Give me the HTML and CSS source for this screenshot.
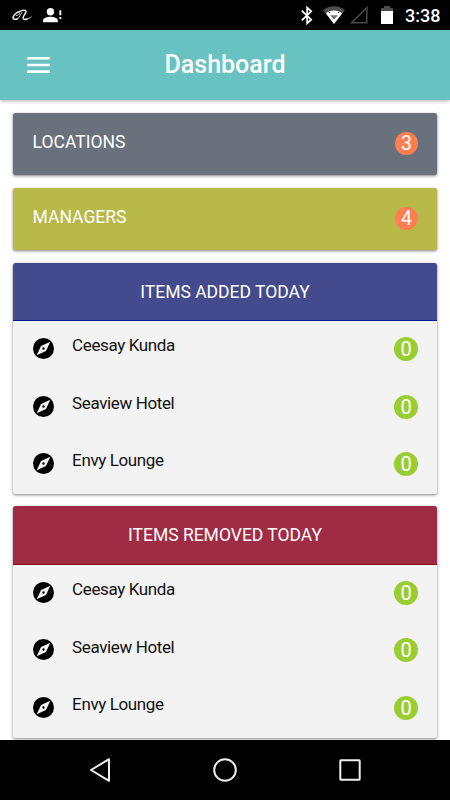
FILE: index.html
```html
<!DOCTYPE html>
<html lang="en">
<head>
<meta charset="utf-8">
<title>Dashboard</title>
<link rel="stylesheet" href="styles.css">
</head>
<body>
<svg class="defs" aria-hidden="true">
  <symbol id="compass" viewBox="0 0 21 21">
    <circle cx="10.5" cy="10.5" r="10.500" fill="#000"/>
    <path fill="#f3f3f3" fill-rule="evenodd" d="M17.300 3.700 13 13 3.700 17.300 8 8ZM10.500 9.300A1.200 1.200 0 1 0 10.500 11.700 1.200 1.200 0 0 0 10.500 9.300Z"/>
  </symbol>
</svg>
<div class="screen">
  <div class="status">
    <div class="status-left">
      <svg width="20" height="12" viewBox="0 0 20 12" fill="none" stroke="#eee" stroke-linecap="round" stroke-linejoin="round"><path stroke-width="1.500" d="M8 2.500C4.500 3 1.500 6 1 8.500C.8 10.800 3.500 10.600 5.500 9.800"/><path stroke-width=".9" d="M4.200 6.500C6 6.600 8.200 5.200 7.600 4.200M5.500 9.800C8 8.500 8 5.500 10 3.500"/><path stroke-width="1.500" d="M8 2.500C10 1 13.500 .6 14 2.200C14.400 4 11 7 11 9C11.200 10.800 13.500 10.500 15 10"/><path stroke-width=".8" d="M15 10C16.500 9.600 18 9 19.200 8"/></svg>
      <svg width="20" height="15" viewBox="0 0 20 15" fill="#fff"><circle cx="7.500" cy="3.700" r="3.700"/><path d="M0 14.300V12.500C0 10 4 8.800 7.400 8.800S14.800 10 14.800 12.500V14.300Z"/><path d="M16.400 2.300H18.300V7.300H16.400ZM16.400 9H18.300V10.900H16.400Z"/></svg>
    </div>
    <div class="status-right">
      <svg class="bt" width="12" height="19" viewBox="0 0 12 19" fill="none" stroke="#fff" stroke-width="1.800"><path d="M.8 4.600 10.200 13.700 6.200 17.300V1.700L10.200 5.300.8 14.400"/></svg>
      <svg class="wifi" width="22" height="19" viewBox="0 0 22 19"><path fill="#4d4d4d" d="M0 4.200C6-1.200 16-1.200 22 4.200L11 18Z"/><path fill="#fff" d="M2.800 7.300C7.500 3.600 14.500 3.600 19.200 7.300L11 18Z"/><path fill="#777" d="M7 9.200H15L11 13.700Z"/><path fill="#444" d="M5 6.700 7.300 5.500 7 7.200ZM17 6.700 14.700 5.500 15 7.200Z"/></svg>
      <svg class="cell" width="18" height="18" viewBox="0 0 18 18" fill="none" stroke="#4a4a4a" stroke-width="1.500"><path d="M1.600 16.800 16.800 1.600V16.800Z"/></svg>
      <svg class="battery" width="12" height="18" viewBox="0 0 12 18"><path fill="#4d4d4d" d="M0 2H3V0H9V2H12V6H0Z"/><path fill="#fff" d="M0 5H12V18H0Z"/></svg>
      <span class="clock">3:38</span>
    </div>
  </div>
  <header class="toolbar">
    <svg width="23" height="16" viewBox="0 0 23 16" fill="#fff"><path d="M0 0H23V2.600H0ZM0 6.700H23V9.300H0ZM0 13.300H23V15.900H0Z"/></svg>
    <h1>Dashboard</h1>
  </header>
  <main>
    <section class="card tile locations"><span>LOCATIONS</span><b class="badge coral">3</b></section>
    <section class="card tile managers"><span>MANAGERS</span><b class="badge coral">4</b></section>
    <section class="card">
      <h2 class="added">ITEMS ADDED TODAY</h2>
      <ul>
        <li><svg class="compass"><use href="#compass"/></svg><span>Ceesay Kunda</span><b class="badge">0</b></li>
        <li><svg class="compass"><use href="#compass"/></svg><span>Seaview Hotel</span><b class="badge">0</b></li>
        <li><svg class="compass"><use href="#compass"/></svg><span>Envy Lounge</span><b class="badge">0</b></li>
      </ul>
    </section>
    <section class="card">
      <h2 class="removed">ITEMS REMOVED TODAY</h2>
      <ul>
        <li><svg class="compass"><use href="#compass"/></svg><span>Ceesay Kunda</span><b class="badge">0</b></li>
        <li><svg class="compass"><use href="#compass"/></svg><span>Seaview Hotel</span><b class="badge">0</b></li>
        <li><svg class="compass"><use href="#compass"/></svg><span>Envy Lounge</span><b class="badge">0</b></li>
      </ul>
    </section>
  </main>
  <nav>
    <svg width="24" height="26" viewBox="0 0 24 26"><path d="M3 13 21 2.200V23.800Z"/></svg>
    <svg width="24" height="26" viewBox="0 0 24 26"><circle cx="12" cy="13" r="10.800"/></svg>
    <svg width="24" height="26" viewBox="0 0 24 26"><rect x="2.300" y="3.300" width="19.400" height="19.400" rx=".6"/></svg>
  </nav>
</div>
</body>
</html>
```
FILE: styles.css
```css
* { box-sizing: border-box; }
body { margin: 0; background: #fff; font-family: Roboto, sans-serif; }
.defs { display: none; }
.screen { width: 450px; height: 800px; display: flex; flex-direction: column; overflow: hidden; }
.status { height: 30px; flex: none; background: #000; color: #fff; display: flex; justify-content: space-between; }
.status-left { display: flex; padding: 8px 0 0 12px; gap: 11px; }
.status-left svg:first-child { margin-top: 1px; }
.status-right { display: flex; padding: 6px 10px 0 0; }
.wifi { margin-left: 10px; }
.cell { margin-left: 5px; }
.battery { margin-left: 13px; }
.clock { margin-left: 12px; font-size: 18px; font-weight: 500; line-height: 20px; width: 35px; white-space: nowrap; }
.toolbar { height: 70px; flex: none; background: #67c2c1; color: #fff; display: grid; grid-template-columns: 50px 1fr 50px; align-items: center; box-shadow: 0 1px 4px rgba(0,0,0,.3); }
.toolbar svg { margin-left: 27px; }
h1 { margin: 0; text-align: center; font-size: 25px; font-weight: 500; line-height: 30px; padding-bottom: 1px; }
main { flex: 1; min-height: 0; padding: 12.5px 12.6px 0; display: flex; flex-direction: column; gap: 12.5px; }
.card { flex: none; background: #f3f3f3; border-radius: 2.5px; overflow: hidden; box-shadow: 0 1px 3px rgba(0,0,0,.5); font-size: 17.5px; }
.tile { height: 62.5px; color: #fff; display: flex; justify-content: space-between; padding: 0 19.4px 0 20px; }
.tile span { line-height: 21px; padding-top: 19px; }
.locations { background: #69717d; }
.managers { background: #b9b949; }
h2 { margin: 0; height: 58.5px; color: #fff; font-size: 17.5px; font-weight: 400; line-height: 21px; padding-top: 19px; text-align: center; }
.added { background: #434a8d; border-bottom: 1px solid #00198a; }
.removed { background: #a02b45; border-bottom: 1px solid #900010; }
ul { list-style: none; margin: 0; padding: 0; }
li { height: 57.6px; padding: 0 19.4px 0 20px; display: flex; }
.compass { width: 21px; height: 21px; margin-top: 17px; flex: none; }
li span { flex: 1; margin-left: 18.5px; padding-top: 14.3px; line-height: 21px; font-size: 17px; letter-spacing: -.38px; color: #111; }
.badge { width: 24px; height: 24px; margin-top: 16px; border-radius: 50%; background: #9acd32; color: #fff; font-size: 20px; line-height: 24px; font-weight: 400; text-align: center; }
.coral { width: 23px; height: 23px; margin-top: 19.6px; background: #ff7f50; font-size: 19.5px; line-height: 23px; }
nav { height: 60px; flex: none; background: #000; display: flex; justify-content: space-between; align-items: center; padding: 0 88px; }
nav svg { fill: none; stroke: #eee; stroke-width: 2; stroke-linejoin: round; }
```
